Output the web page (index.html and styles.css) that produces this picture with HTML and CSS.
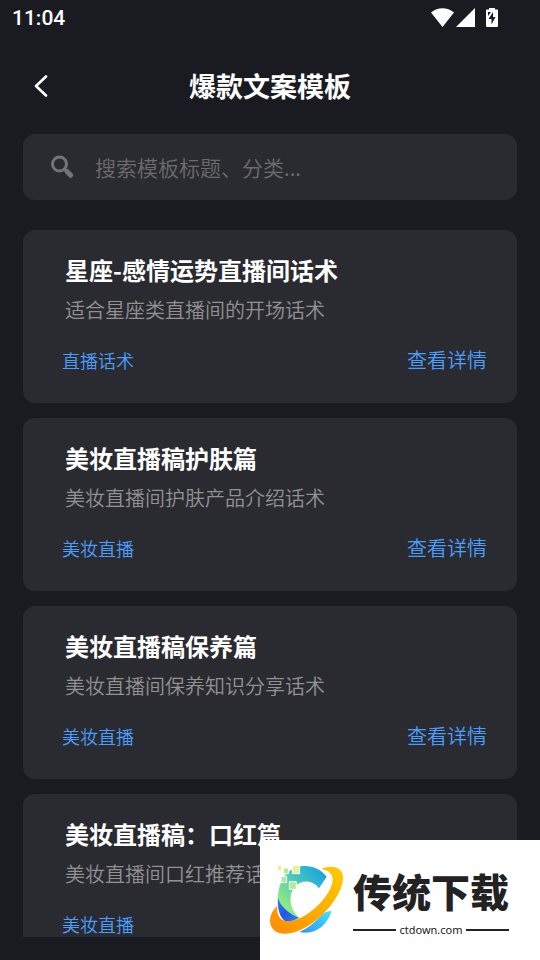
FILE: index.html
```html
<!DOCTYPE html>
<html lang="zh-CN">
<head>
    <meta charset="UTF-8">
    <meta name="viewport" content="width=device-width, initial-scale=1.0">
    <title>爆款文案模板</title>
    <link rel="stylesheet" href="styles.css">
</head>
<body>
    <div class="status-bar">
        <span class="time">11:04</span>
        <svg class="status-icons" width="68" height="20" viewBox="0 0 68 20" fill="#ffffff">
            <path d="M0 4.5C6.500 -1.200 16.500 -1.200 23 4.500L11.500 19Z"/>
            <path d="M44 0V19H25Z"/>
            <path d="M58 0H64V1.500H66Q67 1.500 67 2.500V18Q67 19 66 19H56Q55 19 55 18V2.500Q55 1.500 56 1.500H58Z"/>
            <path d="M62 4L57.500 11H60.500V16.500L64.500 9H62Z" fill="#1a1b20"/>
            <path d="M57 4H60L57 8Z" fill="#1a1b20"/>
        </svg>
    </div>

    <header class="header">
        <button class="back-button" aria-label="返回">
            <svg width="14" height="22" viewBox="0 0 14 22" fill="none" stroke="#ffffff" stroke-width="2.600" stroke-linecap="round" stroke-linejoin="round">
                <path d="M12 1.500L2 11L12 20.500"/>
            </svg>
        </button>
        <h1>爆款文案模板</h1>
    </header>

    <label class="search-box">
        <svg class="search-icon" width="24" height="24" viewBox="0 0 24 24" fill="none" stroke="#737477">
            <circle cx="8.500" cy="9" r="7" stroke-width="3"/>
            <path d="M13.500 14L16 16.500" stroke-width="3"/>
            <path d="M16 16.500L19.700 20.200" stroke-width="5" stroke-linecap="round"/>
        </svg>
        <input type="text" placeholder="搜索模板标题、分类..." aria-label="搜索模板">
    </label>

    <main class="template-list">
        <article class="card">
            <h2>星座-感情运势直播间话术</h2>
            <p>适合星座类直播间的开场话术</p>
            <div class="card-footer">
                <span class="tag">直播话术</span>
                <a href="#">查看详情</a>
            </div>
        </article>
        <article class="card">
            <h2>美妆直播稿护肤篇</h2>
            <p>美妆直播间护肤产品介绍话术</p>
            <div class="card-footer">
                <span class="tag">美妆直播</span>
                <a href="#">查看详情</a>
            </div>
        </article>
        <article class="card">
            <h2>美妆直播稿保养篇</h2>
            <p>美妆直播间保养知识分享话术</p>
            <div class="card-footer">
                <span class="tag">美妆直播</span>
                <a href="#">查看详情</a>
            </div>
        </article>
        <article class="card">
            <h2>美妆直播稿：口红篇</h2>
            <p>美妆直播间口红推荐话</p>
            <div class="card-footer">
                <span class="tag">美妆直播</span>
            </div>
        </article>
    </main>

    <aside class="watermark">
        <svg class="logo" width="93" height="100" viewBox="0 0 279 300">
            <defs>
                <linearGradient id="teal" x1="0" y1="1" x2="1" y2="0">
                    <stop offset="0.200" stop-color="#8fe882"/>
                    <stop offset="0.550" stop-color="#45c8bd"/>
                    <stop offset="1" stop-color="#109bea"/>
                </linearGradient>
                <linearGradient id="orange" x1="0" y1="1" x2="1" y2="0">
                    <stop offset="0" stop-color="#ff8c00"/>
                    <stop offset="1" stop-color="#ffcc00"/>
                </linearGradient>
                <linearGradient id="blue" x1="0" y1="0" x2="1" y2="1">
                    <stop offset="0" stop-color="#2b8df2"/>
                    <stop offset="0.500" stop-color="#2455e8"/>
                    <stop offset="1" stop-color="#1b8cff"/>
                </linearGradient>
                <linearGradient id="sky" x1="0" y1="1" x2="1" y2="0">
                    <stop offset="0" stop-color="#2d94ff"/>
                    <stop offset="1" stop-color="#43e4ff"/>
                </linearGradient>
            </defs>
            <path d="M54 135C51 175 57 200 78 216Q98 215 118 203C85 189 66 168 54 135Z" fill="url(#blue)"/>
            <path d="M120 49C150 44 181 54 200 80L177 115C158 88 121 88 103 112C82 140 91 181 118 203C86 192 61 168 54 143C56 92 80 57 120 49Z" fill="url(#teal)"/>
            <path d="M215 183C202 226 165 257 118 246C151 232 171 210 190 190Q201 183 215 183Z" fill="url(#sky)"/>
            <path d="M183 57C214 44 249 49 249 84C248 128 204 187 153 222C104 256 45 264 32 224C26 205 35 182 52 167C49 196 61 216 91 213C150 205 218 129 218 89C218 69 203 60 183 57Z" fill="url(#orange)"/>
            <g stroke="#ffffff" stroke-width="3">
                <path d="M97 46H119V71H97Z" fill="#e4f29a"/>
                <path d="M63 79H80V98H63Z" fill="#b5ea94"/>
                <path d="M88 95H109V118H88Z" fill="#b5ea94"/>
                <path d="M70 54H86V71H70Z" fill="#b5ea94"/>
                <path d="M52 46H65V62H52Z" fill="#e4f29a"/>
            </g>
        </svg>
        <div class="brand">
            <strong>传统下载</strong>
            <span class="site">ctdown.com</span>
        </div>
    </aside>
</body>
</html>
```

FILE: styles.css
```css
* {
    box-sizing: border-box;
}

body {
    background-color: #1a1b20;
    color: #ffffff;
    font-family: "Noto Sans CJK SC", sans-serif;
    margin: 0;
    height: 100vh;
    padding-bottom: 23px;
    display: flex;
    flex-direction: column;
    overflow: hidden;
}

h1, h2, p {
    margin: 0;
}

.status-bar {
    display: flex;
    justify-content: space-between;
    align-items: center;
    height: 36px;
    padding: 0 41px 0 12px;
    flex-shrink: 0;
}

.time {
    font-family: Roboto, sans-serif;
    font-size: 21px;
    font-weight: 500;
}

.header {
    display: grid;
    grid-template-columns: 58px 1fr 58px;
    align-items: center;
    height: 98px;
    padding: 2px 12px 0;
    flex-shrink: 0;
}

.header h1 {
    font-size: 27px;
    line-height: 40px;
    text-align: center;
}

.back-button {
    display: flex;
    justify-content: center;
    background: none;
    border: none;
    padding: 12px;
    cursor: pointer;
}

.search-box {
    display: flex;
    align-items: center;
    gap: 20px;
    height: 66px;
    margin: 0 23px 30px;
    padding: 0 28px;
    background-color: #2a2b30;
    border-radius: 12px;
    flex-shrink: 0;
}

.search-box input {
    flex: 1;
    min-width: 0;
    padding: 0;
    background: none;
    border: none;
    outline: none;
    color: #ffffff;
    font-family: inherit;
    font-size: 21px;
    font-weight: 350;
}

.search-box input::placeholder {
    color: #6c6c6c;
}

.template-list {
    display: flex;
    flex-direction: column;
    gap: 15px;
    flex: 1;
    min-height: 0;
    padding: 0 23px;
    overflow: hidden;
}

.card {
    flex-shrink: 0;
    padding: 24px 30px 29px 42px;
    background-color: #2a2b30;
    border-radius: 12px;
}

.card h2 {
    font-size: 24px;
    line-height: 32px;
}

.card p {
    margin-top: 10px;
    color: #929292;
    font-size: 20px;
    font-weight: 350;
    line-height: 28px;
}

.card-footer {
    display: flex;
    justify-content: space-between;
    align-items: center;
    margin-top: 22px;
    margin-left: -3px; /* tag hangs slightly left of the title */
    line-height: 28px;
}

.tag {
    color: #4a9eff;
    font-size: 18px;
    font-weight: 350;
}

.card-footer a {
    color: #4a9eff;
    font-size: 20px;
    font-weight: 350;
    text-decoration: none;
}

.watermark {
    position: fixed;
    right: 0;
    bottom: 0;
    display: flex;
    align-items: center;
    width: 280px;
    height: 120px;
    background-color: #ffffff;
    color: #222222;
}

.brand strong {
    display: block;
    font-size: 39px;
    font-weight: 900;
    line-height: 60px;
}

.site {
    display: flex;
    align-items: center;
    gap: 3px;
    font-family: "Noto Sans", sans-serif;
    font-size: 11px;
    line-height: 20px;
}

.site::before, .site::after {
    content: "";
    flex: 1;
    height: 2px;
    background-color: #222222;
}
```
